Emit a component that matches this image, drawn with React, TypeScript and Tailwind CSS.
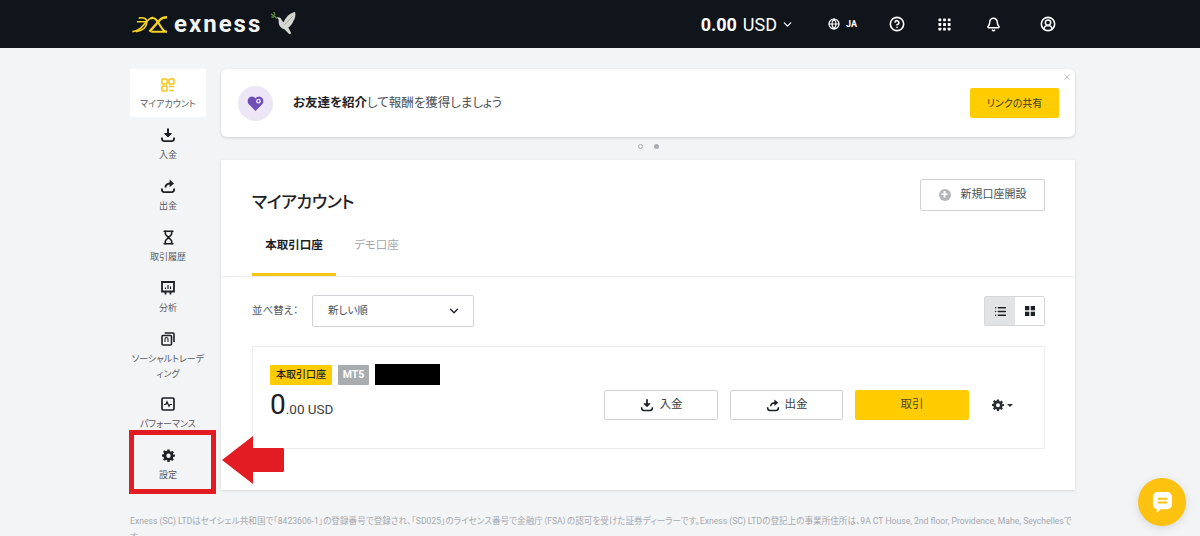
import React from 'react';
import { ChevronDown, Globe, Bell, CircleHelp, CircleUserRound, X, List, Hourglass } from 'lucide-react';

const DepositIcon = ({ className = '' }: { className?: string }) => (
  <svg viewBox="0 0 16 16" className={className} fill="none" stroke="currentColor">
    <path d="M8 1.5v7.5" strokeWidth="2" />
    <path d="M4.6 6.5 8 10l3.4-3.5z" fill="currentColor" strokeWidth="1" strokeLinejoin="round" />
    <path d="M1.8 10.5c0 2.6 1 3.7 2.6 3.7h7.2c1.6 0 2.6-1.1 2.6-3.7" strokeWidth="1.8" />
  </svg>
);

const WithdrawIcon = ({ className = '' }: { className?: string }) => (
  <svg viewBox="0 0 16 16" className={className} fill="none" stroke="currentColor">
    <path d="M5.5 9.5c0-2.6 1.8-4 5-4" strokeWidth="1.9" />
    <path d="M9.6 1.6 14 5.5 9.6 9.2z" fill="currentColor" stroke="none" />
    <path d="M1.8 10.5c0 2.6 1 3.7 2.6 3.7h7.2c1.6 0 2.6-1.1 2.6-3.7" strokeWidth="1.8" />
  </svg>
);

const GearIcon = ({ className = '' }: { className?: string }) => (
  <svg viewBox="0 0 24 24" className={className} fill="currentColor">
    <path
      fillRule="evenodd"
      d="M10 1h4l.6 3.2 1.9.8 2.7-1.8 2.8 2.8-1.8 2.7.8 1.9L24 10v4l-3.2.6-.8 1.9 1.8 2.7-2.8 2.8-2.7-1.8-1.9.8L14 24h-4l-.6-3.2-1.9-.8-2.7 1.8L2 19.2l1.8-2.7-.8-1.9L0 14v-4l3-.4.8-1.9L2 5l2.8-2.8 2.7 1.8 1.9-.8zM12 8.5a4 4 0 1 0 0 8 4 4 0 0 0 0-8z"
    />
  </svg>
);

const AccountsIcon = ({ className = '' }: { className?: string }) => (
  <svg viewBox="0 0 14 14" className={className} fill="none" stroke="#f5c518" strokeWidth="1.5">
    <rect x="1" y="1" width="5" height="5" rx="0.8" />
    <rect x="8" y="1" width="5" height="5" rx="0.8" />
    <rect x="1" y="8" width="5" height="5" rx="0.8" />
    <path d="M8 8.5h5M8 12.5h5" />
  </svg>
);

const AnalysisIcon = ({ className = '' }: { className?: string }) => (
  <svg viewBox="0 0 14 14" className={className} fill="none" stroke="currentColor">
    <path d="M1 1h12v9.5H1z" strokeWidth="1.8" />
    <path d="M4.5 10v3.5M9.5 10v3.5" strokeWidth="1.8" />
    <path d="M4.5 8V6.5M7 8V4M9.5 8V5.5" strokeWidth="1.2" />
  </svg>
);

const SocialIcon = ({ className = '' }: { className?: string }) => (
  <svg viewBox="0 0 14 14" className={className} fill="none" stroke="currentColor" strokeWidth="1.6">
    <rect x="1" y="3.5" width="9.5" height="9.5" rx="1" />
    <path d="M3.7 1H12a1 1 0 0 1 1 1v8" />
    <path d="M4 10V7a1.5 1.5 0 0 1 3 0v3" strokeWidth="1.1" />
  </svg>
);

const PerformanceIcon = ({ className = '' }: { className?: string }) => (
  <svg viewBox="0 0 14 14" className={className} fill="none" stroke="currentColor">
    <rect x="1" y="1" width="12" height="12" rx="1.2" strokeWidth="1.7" />
    <path d="M3 7.5h1.8L6 4.8l2 4.4 1-1.7h2" strokeWidth="1.2" />
  </svg>
);

const GridIcon = ({ className = '' }: { className?: string }) => (
  <svg viewBox="0 0 14 14" className={className} fill="currentColor">
    {[0, 5, 10].map((y) =>
      [0, 5, 10].map((x) => <rect key={`${x}-${y}`} x={x + 0.5} y={y + 0.5} width="3" height="3" rx="0.5" />),
    )}
  </svg>
);

const Logo = () => (
  <div className="flex items-center">
    <svg viewBox="0 0 40 20" className="h-[18px] w-[37px]" fill="none" stroke="#f5d423">
      <path d="M1 18.5c6-.5 9-3 13-8 3-4 6-7 10-8" strokeWidth="2" />
      <path d="M6 7.5h11M8 3.5c6-1.500 9.500 1 9 5-.5 5-5 9-12 10" strokeWidth="1.8" />
      <path d="M20 18.500 32 5c1.500-1.500 4-2.500 7.500-2.500" strokeWidth="2.6" />
      <path d="M21 4c3-1.500 5-1 7 2l6 9c1 1.800 3 3.500 5.500 3.500H22" strokeWidth="2.2" />
    </svg>
    <span className="ml-[6px] text-[24px] leading-none font-bold tracking-[2px] text-[#f4f4f4]">exness</span>
    <svg viewBox="0 0 28 28" className="ml-[8px] h-[27px] w-[27px]">
      <path d="M7 7c2-1 4 0 5 2l2 3c2-5 6-10 12-11 1 3 0 7-2 10-1 3-3 5-5 6l3 6-2 1-5-5c-4-1-6-4-6-8 0-2 0-3-2-4z" fill="#d4d6d0" />
      <path d="M15 14c3-2 5-5 9-9" stroke="#9b9d98" strokeWidth="1" fill="none" />
      <path d="M1 3c2 1 4 2 6 5M4 1l1 3M1.5 6.5 4 6" stroke="#5d8a3c" strokeWidth="1.4" fill="none" />
    </svg>
  </div>
);

const navItems = [
  { label: 'マイアカウント', Icon: AccountsIcon, active: true, size: 'h-[14px] w-[14px]' },
  { label: '入金', Icon: DepositIcon, size: 'h-[16px] w-[16px]' },
  { label: '出金', Icon: WithdrawIcon, size: 'h-[16px] w-[16px]' },
  { label: '取引履歴', Icon: Hourglass, size: 'h-[15px] w-[15px]' },
  { label: '分析', Icon: AnalysisIcon, size: 'h-[14px] w-[14px]' },
  { label: 'ソーシャルトレーディング', Icon: SocialIcon, size: 'h-[14px] w-[14px]' },
  { label: 'パフォーマンス', Icon: PerformanceIcon, size: 'h-[14px] w-[14px]' },
  { label: '設定', Icon: GearIcon, size: 'h-[13px] w-[13px]' },
];

const App: React.FC = () => {
  return (
    <div className="relative h-[536px] overflow-hidden bg-[#f3f4f6] font-['Roboto','Noto_Sans_CJK_JP',sans-serif] text-[#2b2f33] [font-feature-settings:'palt']">
      {/* Header */}
      <header className="flex h-[48px] items-center bg-[#10151c] pl-[131px] text-white">
        <Logo />
        <div className="ml-auto flex items-center">
          <span className="text-[18px] font-bold">0.00</span>
          <span className="ml-[6px] text-[18px] font-normal">USD</span>
          <ChevronDown className="ml-[4px] h-[13px] w-[13px]" strokeWidth={2.2} />
          <Globe className="ml-[34px] h-[12px] w-[12px]" strokeWidth={2.4} />
          <span className="ml-[6px] pt-[1px] text-[9px] font-bold">JA</span>
          <CircleHelp className="ml-[32px] h-[16px] w-[16px]" strokeWidth={2.4} />
          <GridIcon className="ml-[33px] h-[13px] w-[13px]" />
          <Bell className="ml-[35px] h-[15px] w-[15px]" strokeWidth={2.4} />
          <CircleUserRound className="ml-[39px] mr-[144px] h-[16px] w-[16px]" strokeWidth={2.4} />
        </div>
      </header>

      <div className="flex pl-[130px] pt-[21px]">
        {/* Sidebar */}
        <nav className="flex w-[76px] shrink-0 flex-col">
          {navItems.map(({ label, Icon, active, size }) => (
            <div
              key={label}
              className={`flex flex-col items-center pt-[9px] pb-[5px] text-center ${active ? 'mb-[1px] h-[48px] bg-white' : 'min-h-[51px] text-[#1d2125]'}`}
            >
              <div className="flex h-[16px] items-center justify-center">
                <Icon className={size} strokeWidth={2.6} />
              </div>
              <span className="mt-[5px] text-[9px] leading-[15px] text-[#55595e]">{label}</span>
            </div>
          ))}
        </nav>

        {/* Main */}
        <main className="ml-[15px] w-[854px]">
          <div className="relative flex h-[68px] items-center rounded-[6px] bg-white pl-[17px] pr-[16px] shadow-[0_1px_3px_rgba(0,0,0,0.15)]">
            <div className="flex h-[35px] w-[35px] items-center justify-center rounded-full bg-[#ece6f6]">
              <svg viewBox="0 0 16 16" className="h-[17px] w-[17px]">
                <path d="M8 15 1.5 8.5C-.5 6 1 1.5 4.500 1.500 6 1.500 7.200 2.200 8 3.300 8.800 2.200 10 1.500 11.500 1.500 15 1.500 16.500 6 14.500 8.500z" fill="#6f4fb5" />
                <circle cx="10.8" cy="5.8" r="2.3" fill="#e9e4f4" />
                <circle cx="10.8" cy="5.8" r="1" fill="#6f4fb5" />
              </svg>
            </div>
            <p className="ml-[20px] text-[12.5px] text-[#4a4f55]">
              <span className="font-bold text-[#1d2125]">お友達を紹介</span>して報酬を獲得しましょう
            </p>
            <button className="ml-auto h-[30px] w-[89px] rounded-[2px] bg-[#ffcc00] text-[10px] text-[#3a3a2a]">リンクの共有</button>
            <X className="absolute right-[3px] top-[3px] h-[10px] w-[10px] text-[#a5a8ac]" strokeWidth={1.5} />
          </div>

          <div className="flex h-[23px] items-start justify-center gap-[11px] pt-[7px]">
            <span className="h-[5px] w-[5px] rounded-full border border-[#a9adb2]" />
            <span className="h-[5px] w-[5px] rounded-full bg-[#a9adb2]" />
          </div>

          {/* Accounts card */}
          <section className="h-[330px] bg-white shadow-[0_1px_3px_rgba(0,0,0,0.12)]">
            <div className="h-[117px] border-b border-[#eceded] pl-[31px] pr-[30px]">
              <div className="flex justify-between pt-[19px]">
                <h1 className="pt-[10px] text-[17px] leading-[27px] font-medium tracking-[-0.5px] text-[#1d2125]">マイアカウント</h1>
                <button className="flex h-[32px] w-[125px] items-center justify-center rounded-[2px] border border-[#d0d3d6] text-[11px] text-[#4a4f55]">
                  <span className="mr-[10px] flex h-[12px] w-[12px] items-center justify-center rounded-full bg-[#b3b6b9] text-[12px] leading-none font-bold text-white">+</span>
                  新規口座開設
                </button>
              </div>
              <div className="mt-[19px] flex">
                <div className="h-[41px] w-[84px] border-b-[3px] border-[#f5c518] pt-[2px] text-center text-[11.5px] leading-[16px] font-bold text-[#1d2125]">本取引口座</div>
                <div className="ml-[18px] pt-[2px] text-[11.5px] leading-[16px] text-[#a5a8ac]">デモ口座</div>
              </div>
            </div>

            <div className="pl-[31px] pr-[30px]">
              <div className="flex items-center pt-[18px]">
                <span className="w-[60px] text-[10.5px] text-[#55595e]">並べ替え：</span>
                <div className="flex h-[32px] w-[162px] items-center justify-between rounded-[2px] border border-[#d0d3d6] pl-[15px] pr-[12px] text-[10.5px] text-[#4a4f55]">
                  新しい順
                  <ChevronDown className="h-[14px] w-[14px] text-[#1d2125]" strokeWidth={2.2} />
                </div>
                <div className="ml-auto flex h-[30px] rounded-[2px] border border-[#d5d7d9]">
                  <div className="flex w-[30px] items-center justify-center bg-[#e2e3e4]">
                    <List className="h-[13px] w-[13px] text-[#1d2125]" strokeWidth={2.5} />
                  </div>
                  <div className="flex w-[29px] items-center justify-center bg-white">
                    <svg viewBox="0 0 10 10" className="h-[10px] w-[10px]" fill="#1d2125">
                      <rect width="4.3" height="4.3" />
                      <rect x="5.7" width="4.3" height="4.3" />
                      <rect y="5.7" width="4.3" height="4.3" />
                      <rect x="5.7" y="5.7" width="4.3" height="4.3" />
                    </svg>
                  </div>
                </div>
              </div>

              {/* Account row */}
              <div className="mt-[19px] flex h-[103px] items-start border border-[#eceded] pl-[17px] pr-[31px] pt-[17px]">
                <div>
                  <div className="flex items-center">
                    <span className="flex h-[20px] w-[62px] items-center justify-center rounded-[1px] bg-[#ffcc00] text-[10px] font-medium text-[#1d2125]">本取引口座</span>
                    <span className="ml-[6px] flex h-[20px] w-[31px] items-center justify-center rounded-[1px] bg-[#a9acaf] text-[10.5px] font-bold text-white">MT5</span>
                    <span className="ml-[6px] h-[21px] w-[65px] bg-black" />
                  </div>
                  <p className="mt-[2px] flex items-baseline leading-[36px] text-[#1d2125]">
                    <span className="text-[28px]">0</span>
                    <span className="text-[13.5px] text-[#3a3e42]">.00 USD</span>
                  </p>
                </div>
                <div className="ml-auto flex items-center pt-[26px]">
                  <button className="flex h-[30px] w-[114px] items-center justify-center rounded-[2px] border border-[#d0d3d6] text-[11.5px] text-[#3a3e42]">
                    <DepositIcon className="mr-[6px] h-[14px] w-[14px] text-[#1d2125]" />
                    入金
                  </button>
                  <button className="ml-[12px] flex h-[30px] w-[113px] items-center justify-center rounded-[2px] border border-[#d0d3d6] text-[11.5px] text-[#3a3e42]">
                    <WithdrawIcon className="mr-[5px] h-[14px] w-[14px] text-[#1d2125]" />
                    出金
                  </button>
                  <button className="ml-[12px] h-[30px] w-[114px] rounded-[2px] bg-[#ffcc00] text-[11.5px] text-[#4a4a30]">取引</button>
                  <div className="ml-[23px] flex items-center text-[#2b2f33]">
                    <GearIcon className="h-[12px] w-[12px]" />
                    <span className="ml-[3px] h-0 w-0 border-x-[3px] border-t-[3px] border-x-transparent border-t-[#2b2f33]" />
                  </div>
                </div>
              </div>
            </div>
          </section>
        </main>
      </div>

      {/* Footer */}
      <p className="mx-[130px] mt-[23px] w-[946px] text-[8.6px] leading-[16px] text-[#a6a9ad]">
        Exness (SC) LTDはセイシェル共和国で「8423606-1」の登録番号で登録され、「SD025」のライセンス番号で金融庁（FSA）の認可を受けた証券ディーラーです。Exness (SC) LTDの登記上の事業所住所は、9A CT House, 2nd floor, Providence, Mahe, Seychellesです。
      </p>

      {/* Red annotation over the settings item */}
      <div className="absolute left-[129px] top-[430px] h-[64px] w-[87px] border-[5px] border-[#e31b23]" />
      <svg viewBox="0 0 64 50" className="absolute left-[221px] top-[435px] h-[50px] w-[64px]">
        <path d="M1 25 32 1v12h30a1.5 1.5 0 0 1 1 1v22a1.5 1.5 0 0 1-1 1H32v12z" fill="#e31b23" />
      </svg>

      {/* Chat bubble */}
      <button className="absolute left-[1138px] top-[478px] flex h-[48px] w-[48px] items-center justify-center rounded-full bg-[#fdc20f] shadow-[0_2px_10px_rgba(0,0,0,0.12)]">
        <svg viewBox="0 0 22 24" className="h-[23px] w-[21px]">
          <path d="M6 1h10a5 5 0 0 1 5 5v8a5 5 0 0 1-5 5H9l-4 4v-4.200A5 5 0 0 1 1 14V6a5 5 0 0 1 5-5z" fill="#fff" />
          <path d="M6 8h10M6 12h10" stroke="#fdc20f" strokeWidth="2" />
        </svg>
      </button>
    </div>
  );
};

export default App;
